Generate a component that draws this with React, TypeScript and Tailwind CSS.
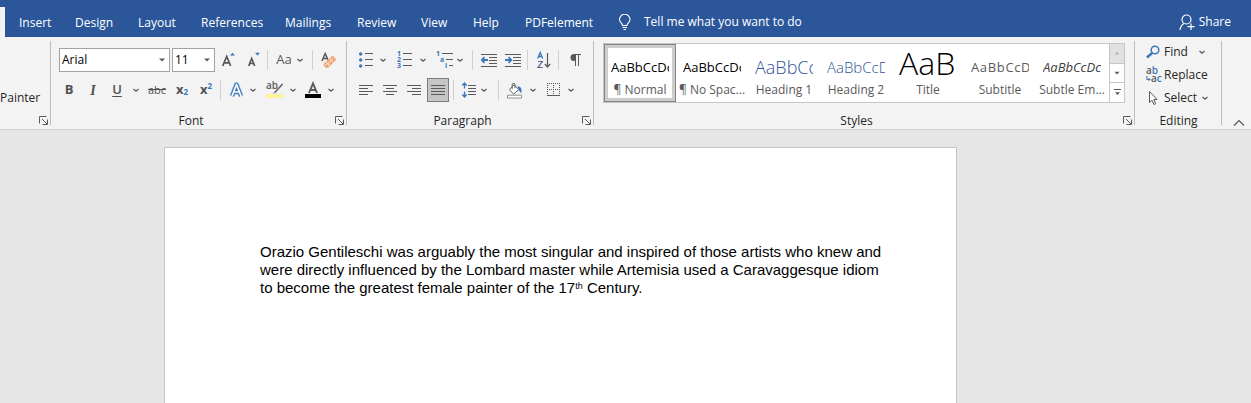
import type { ReactNode } from "react";
import clsx from "clsx";

const TABS = [
  { label: "Insert", width: "w-14" },
  { label: "Design", width: "w-[63px]" },
  { label: "Layout", width: "w-[63px]" },
  { label: "References", width: "w-[84px]" },
  { label: "Mailings", width: "w-[72px]" },
  { label: "Review", width: "w-16" },
  { label: "View", width: "w-[52px]" },
  { label: "Help", width: "w-[52px]" },
  { label: "PDFelement", width: "w-[93px]" },
];

const STYLES = [
  { name: "¶ Normal", sample: "AaBbCcDc", look: "text-[13px] text-black" },
  { name: "¶ No Spac...", sample: "AaBbCcDc", look: "text-[13px] text-black" },
  { name: "Heading 1", sample: "AaBbCc", look: "text-[18px] font-light text-[#2f5496]" },
  { name: "Heading 2", sample: "AaBbCcD", look: "text-[15px] font-light text-[#2f5496]" },
  { name: "Title", sample: "AaB", look: "pb-2 text-[32px] font-light text-black" },
  { name: "Subtitle", sample: "AaBbCcD", look: "text-[13px] tracking-wider text-[#5a5a5a]" },
  { name: "Subtle Em...", sample: "AaBbCcDc", look: "text-[13px] italic text-[#404040]" },
];

const GRAY = "#595959";
const BLUE = "#3b76bb";

function Tool({ label, className, children }: { label: string; className?: string; children: ReactNode }) {
  return (
    <button aria-label={label} title={label} className={clsx("flex h-6 shrink-0 items-center justify-center", className)}>
      {children}
    </button>
  );
}

function ChevronIcon({ className }: { className?: string }) {
  return (
    <svg className={className} width="8" height="8" viewBox="0 0 8 8" fill="none" stroke={GRAY} strokeWidth="1.2">
      <path d="M1.500 3 4 5.200 6.500 3" />
    </svg>
  );
}

function Chevron({ label, className }: { label: string; className?: string }) {
  return (
    <Tool label={label} className={clsx("w-2", className)}>
      <ChevronIcon />
    </Tool>
  );
}

function Separator({ className }: { className?: string }) {
  return <span className={clsx("h-5 w-px shrink-0 bg-[#d0d0d0]", className)} />;
}

// Horizontal strokes given as [x1, x2, y]
function Lines({ rows, color = GRAY }: { rows: number[][]; color?: string }) {
  return (
    <g stroke={color} strokeWidth="1">
      {rows.map(([x1, x2, y]) => (
        <path key={`${x1}-${y}`} d={`M${x1} ${y}H${x2}`} />
      ))}
    </g>
  );
}

function Group({ title, launcher, className, children }: { title: string; launcher?: boolean; className?: string; children: ReactNode }) {
  return (
    <section aria-label={title || "Clipboard"} className={clsx("relative flex shrink-0 flex-col pt-[11px]", className)}>
      <div className="h-[66px]">{children}</div>
      <div className={clsx("text-center text-[12px] leading-4 text-[#262626]", launcher && "pr-4")}>{title}</div>
      {launcher && (
        <button aria-label={`${title || "Clipboard"} settings`} className="absolute right-[3px] bottom-1">
          <svg width="9" height="9" viewBox="0 0 9 9" fill="none" stroke={GRAY}>
            <path d="M.5 7.500V.5H7.500M3 3 8 8M8.500 3.500V8.500H3.500" />
          </svg>
        </button>
      )}
      <span className="absolute top-1 right-0 bottom-1 w-px bg-[#bdbdbd]" />
    </section>
  );
}

function Combo({ label, value, className }: { label: string; value: string; className?: string }) {
  return (
    <button
      aria-label={label}
      className={clsx("ml-0.5 flex h-6 shrink-0 items-center justify-between border border-[#a3a3a3] bg-white pr-1 pl-0.5 text-[12px]", className)}
    >
      {value}
      <svg width="6" height="4" viewBox="0 0 6 4" fill={GRAY}>
        <path d="M0 .5H6L3 3.500Z" />
      </svg>
    </button>
  );
}

function AlignIcon({ rows }: { rows: number[][] }) {
  return (
    <svg width="14" height="14" viewBox="0 0 14 14">
      <Lines rows={rows} />
    </svg>
  );
}

function IndentIcon({ reverse }: { reverse?: boolean }) {
  return (
    <svg width="16" height="14" viewBox="0 0 16 14" fill="none">
      <Lines rows={[[0, 16, 1.5], [8, 16, 4.5], [8, 16, 7.5], [8, 16, 10.5], [0, 16, 13.5]]} />
      <path
        d={reverse ? "M0 7H6M3.500 4.200 6.300 7 3.500 9.800" : "M7 7H1M3.500 4.200.7 7 3.500 9.800"}
        stroke={BLUE}
        strokeWidth="1.8"
      />
    </svg>
  );
}

function FontGroup() {
  return (
    <Group title="Font" launcher className="w-[296px]">
      <div className="flex flex-col gap-1.5 pl-1.5">
        <div className="flex h-6 items-center">
          <Combo label="Font name" value="Arial" className="w-[111px]" />
          <Combo label="Font size" value="11" className="w-[43px]" />
          <Tool label="Increase font size" className="ml-0.5 w-6">
            <svg width="14" height="16" viewBox="0 0 14 16">
              <path d="M.7 14 4.700 4.500 8.700 14M2.200 10.800H7.200" fill="none" stroke={GRAY} strokeWidth="1.700" />
              <path d="M8 3.500H13L10.500 .8Z" fill={BLUE} />
            </svg>
          </Tool>
          <Tool label="Decrease font size" className="w-[26px]">
            <svg width="14" height="16" viewBox="0 0 14 16">
              <path d="M1.700 14 4.700 6.500 7.700 14M2.800 11.500H6.600" fill="none" stroke={GRAY} strokeWidth="1.700" />
              <path d="M8 .8H13L10.500 3.500Z" fill={BLUE} />
            </svg>
          </Tool>
          <Separator />
          <Tool label="Change case" className="w-8 text-[13px] font-medium text-[#595959]">Aa</Tool>
          <Chevron label="Case options" className="-ml-1" />
          <Separator className="ml-2" />
          <Tool label="Clear formatting" className="w-8">
            <svg width="16" height="17" viewBox="0 0 16 17" fill="none">
              <path d="M1 9 4.200 1.500 7 8M2.200 6.500H6" stroke={GRAY} strokeWidth="1.500" />
              <path d="M3 11.500 11.500 3.500 15.500 7.500 7 16H5L2.500 13.500Z" fill="#f0aa7c" />
              <path d="M5 10 9.300 14.300M8.500 6.500 12.500 10.500" stroke="#fbe3d2" />
              <path d="M4.500 12.500H5.500M7 11H8M9 9H10M11 7H12" stroke="#fff" />
            </svg>
          </Tool>
        </div>
        <div className="flex h-6 items-center text-[#505050]">
          <Tool label="Bold" className="w-6 text-[13px] font-bold">B</Tool>
          <Tool label="Italic" className="w-6 font-['Liberation_Serif',serif] text-[14px] font-bold italic">I</Tool>
          <Tool label="Underline" className="w-6 text-[13px] font-semibold underline underline-offset-2">U</Tool>
          <Chevron label="Underline options" className="ml-[3px]" />
          <Tool label="Strikethrough" className="ml-2 w-[18px] text-[11px] line-through">abc</Tool>
          <Tool label="Subscript" className="ml-2 w-4 text-[13px] font-bold">
            x<sub className="text-[8px] text-[#3b76bb]">2</sub>
          </Tool>
          <Tool label="Superscript" className="ml-2 w-4 text-[13px] font-bold">
            x<sup className="text-[8px] text-[#3b76bb]">2</sup>
          </Tool>
          <Separator className="ml-1.5" />
          <Tool label="Text effects" className="ml-2 w-4">
            <svg width="16" height="16" viewBox="0 0 16 16" fill="none" strokeLinejoin="round">
              <path d="M3 14 7.500 2.500 12 14M4.500 10H10.500" stroke="#c3daf0" strokeWidth="5.500" />
              <path d="M3 14 7.500 2.500 12 14M4.500 10H10.500" stroke={BLUE} strokeWidth="4" />
              <path d="M3 14 7.500 2.500 12 14M4.500 10H10.500" stroke="#fff" strokeWidth="1.700" />
            </svg>
          </Tool>
          <Chevron label="Text effect options" className="ml-1" />
          <Tool label="Highlight color" className="ml-2 w-5">
            <svg className="overflow-visible" width="18" height="18" viewBox="0 0 18 18">
              <text x="0" y="8" fontSize="10" fontWeight="600" fill={GRAY}>ab</text>
              <path d="M16.300 2 8.500 10.500 6.500 13 9.500 12 17 4" fill={GRAY} stroke="#f3f3f3" strokeWidth=".5" />
              <path d="M0 13H17V17H0Z" fill="#fdf59a" />
            </svg>
          </Tool>
          <Chevron label="Highlight options" className="ml-1" />
          <Tool label="Font color" className="ml-2 w-4">
            <svg width="16" height="18" viewBox="0 0 16 18">
              <path d="M4 12 8 2.500 12 12M5.500 9H10.500" fill="none" stroke={GRAY} strokeWidth="1.900" />
              <path d="M0 13H16V17H0Z" />
            </svg>
          </Tool>
          <Chevron label="Font color options" className="ml-1.5" />
        </div>
      </div>
    </Group>
  );
}

function ParagraphGroup() {
  return (
    <Group title="Paragraph" launcher className="w-[247px]">
      <div className="flex flex-col gap-1.5 pl-3">
        <div className="flex h-6 items-center">
          <Tool label="Bullets" className="w-4">
            <svg width="16" height="16" viewBox="0 0 16 16">
              <g fill={BLUE}>
                <circle cx="1.700" cy="2" r="1.700" />
                <circle cx="1.700" cy="8" r="1.700" />
                <circle cx="1.700" cy="14" r="1.700" />
              </g>
              <Lines rows={[[6, 14, 1.5], [6, 14, 7.5], [6, 14, 13.5]]} />
            </svg>
          </Tool>
          <Chevron label="Bullet options" className="ml-1" />
          <Tool label="Numbering" className="ml-2.5 w-4">
            <svg className="overflow-visible" width="16" height="18" viewBox="0 0 16 18">
              <g fill={BLUE} fontSize="7" fontWeight="700">
                <text x="0" y="5">1</text>
                <text x="0" y="11">2</text>
                <text x="0" y="17">3</text>
              </g>
              <Lines rows={[[6, 15, 2.5], [6, 15, 8.5], [6, 15, 14.5]]} />
            </svg>
          </Tool>
          <Chevron label="Numbering options" className="ml-1.5" />
          <Tool label="Multilevel list" className="ml-2 w-[19px]">
            <svg className="overflow-visible" width="18" height="18" viewBox="0 0 18 18">
              <g fill={BLUE} fontSize="7" fontWeight="700">
                <text x="0" y="5">1</text>
                <text x="4" y="11">a</text>
                <text x="9" y="17">i</text>
              </g>
              <Lines rows={[[6, 17, 2.5], [10, 17, 8.5], [13, 17, 14.5]]} />
            </svg>
          </Tool>
          <Chevron label="List options" className="ml-0.5" />
          <Separator className="ml-2" />
          <Tool label="Decrease indent" className="ml-2 w-4"><IndentIcon /></Tool>
          <Tool label="Increase indent" className="ml-2 w-4"><IndentIcon reverse /></Tool>
          <Separator className="ml-1.5" />
          <Tool label="Sort" className="ml-2 w-4">
            <svg width="14" height="18" viewBox="0 0 14 18" fill="none">
              <path d="M.7 7.500 3.200 1.500 5.700 7.500M1.500 5.500H5" stroke={BLUE} strokeWidth="1.300" />
              <path d="M1 10.500H5.300L1 16.500H5.700" stroke="#5a5f8a" strokeWidth="1.200" />
              <path d="M10.500 2V16M7.800 13 10.500 16 13.200 13" stroke={GRAY} strokeWidth="1.200" />
            </svg>
          </Tool>
          <Separator className="ml-1.5" />
          <Tool label="Show paragraph marks" className="ml-2 w-4">
            <svg width="11" height="14" viewBox="0 0 11 14">
              <path d="M6 1H4A3.500 3.500 0 0 0 4 8H6Z" fill={GRAY} />
              <path d="M4 1.500H11M5.500 1V13M8.500 1V13" fill="none" stroke={GRAY} />
            </svg>
          </Tool>
        </div>
        <div className="flex h-6 items-center">
          <Tool label="Align left" className="w-3.5">
            <AlignIcon rows={[[0, 14, 2.5], [0, 9, 5.5], [0, 14, 8.5], [0, 9, 11.5]]} />
          </Tool>
          <Tool label="Center" className="ml-2.5 w-3.5">
            <AlignIcon rows={[[0, 14, 2.5], [3, 11, 5.5], [0, 14, 8.5], [3, 11, 11.5]]} />
          </Tool>
          <Tool label="Align right" className="ml-2.5 w-3.5">
            <AlignIcon rows={[[0, 14, 2.5], [5, 14, 5.5], [0, 14, 8.5], [5, 14, 11.5]]} />
          </Tool>
          <Tool label="Justify" className="ml-1.5 w-[22px] border border-[#7b7b7b] bg-[#c5c6c8]">
            <AlignIcon rows={[[0, 14, 2.5], [0, 14, 5.5], [0, 14, 8.5], [0, 14, 11.5]]} />
          </Tool>
          <Separator className="ml-1" />
          <Tool label="Line spacing" className="ml-2 w-3.5">
            <svg width="14" height="16" viewBox="0 0 14 16" fill="none">
              <path d="M2.500 1V6.500M.3 3.500 2.500 1 4.700 3.500M2.500 9.500V15M.3 12.500 2.500 15 4.700 12.500" stroke={BLUE} strokeWidth="1.300" />
              <Lines rows={[[6, 14, 3.5], [6, 14, 6.5], [6, 14, 9.5], [6, 14, 12.5]]} />
            </svg>
          </Tool>
          <Chevron label="Spacing options" className="ml-1" />
          <Separator className="ml-2.5" />
          <Tool label="Shading" className="ml-2 w-4">
            <svg width="17" height="17" viewBox="0 0 17 17" fill="none">
              <path d="M2.500 7.500 7.500 2.500 12.500 7.500 7 12.300Z" fill="#fff" stroke={GRAY} />
              <path d="M5.500 7V2.500A1.500 1.500 0 0 1 8.500 2.500V6" stroke={GRAY} />
              <path d="M11 4C14.500 4 16.500 7 15 11.500L12.500 8Z" fill={BLUE} />
              <path d="M.5 13.500H15.500V16.500H.5Z" fill="#fff" stroke="#8a8a8a" />
            </svg>
          </Tool>
          <Chevron label="Shading options" className="ml-1.5" />
          <Tool label="Borders" className="ml-2.5 w-3.5">
            <svg width="14" height="14" viewBox="0 0 14 14" fill="none" stroke={GRAY}>
              <path d="M0 .5H13M0 6.500H13M.5 0V12M6.500 0V12M12.500 0V12" strokeDasharray="1 1" />
              <path d="M0 12.500H13" />
            </svg>
          </Tool>
          <Chevron label="Border options" className="ml-1.5" />
        </div>
      </div>
    </Group>
  );
}

function StylesGroup() {
  return (
    <Group title="Styles" launcher className="min-w-0 flex-1">
      <div className="-mt-[5px] mr-2.5 ml-[9px] flex h-[60px] border border-[#c6c6c6] bg-white">
        <div className="flex min-w-0 flex-1 overflow-hidden">
          {STYLES.map(({ name, sample, look }, i) => (
            <button key={name} className="relative flex h-[58px] w-[72px] shrink-0 flex-col items-center pt-2">
              {i === 0 && (
                <span className="absolute inset-0 border border-[#858585] outline-[3px] -outline-offset-4 outline-[#cdcdcd]" />
              )}
              <span className={clsx("flex h-[30px] w-[58px] shrink-0 items-center overflow-hidden leading-none whitespace-nowrap", look)}>
                {sample}
              </span>
              <span className="text-[12px] leading-4 whitespace-nowrap text-[#595959]">{name}</span>
            </button>
          ))}
        </div>
        <div className="flex w-[15px] shrink-0 flex-col divide-y divide-[#c6c6c6] border-l border-[#c6c6c6]">
          <button aria-label="Scroll styles up" className="flex flex-1 items-center justify-center bg-[#e1e1e1]">
            <svg width="6" height="4" viewBox="0 0 6 4" fill="#b5b5b5"><path d="M.5 3.500H5.500L3 .8Z" /></svg>
          </button>
          <button aria-label="Scroll styles down" className="flex flex-1 items-center justify-center">
            <svg width="6" height="4" viewBox="0 0 6 4" fill={GRAY}><path d="M.5 .8H5.500L3 3.500Z" /></svg>
          </button>
          <button aria-label="More styles" className="flex flex-1 items-center justify-center">
            <svg width="7" height="7" viewBox="0 0 7 7" fill={GRAY}><path d="M0 0H7V1H0ZM1 3.300H6L3.500 6Z" /></svg>
          </button>
        </div>
      </div>
    </Group>
  );
}

function EditingGroup() {
  return (
    <Group title="Editing" className="w-[87px]">
      <div className="-mt-2 flex flex-col pl-[11px] text-[12px] text-[#262626]">
        <button className="flex h-[23px] items-center gap-1">
          <svg width="14" height="14" viewBox="0 0 14 14" fill="none" stroke={BLUE}>
            <circle cx="9" cy="5" r="3.800" strokeWidth="1.500" />
            <path d="M6 8 1 12.500" strokeWidth="2.400" />
          </svg>
          Find
          <ChevronIcon className="ml-1.5" />
        </button>
        <button className="flex h-[23px] items-center gap-0.5">
          <svg className="overflow-visible" width="16" height="16" viewBox="0 0 16 16">
            <g fontSize="10" fontWeight="600" fill={GRAY}>
              <text x="0" y="7">a<tspan fill={BLUE}>b</tspan></text>
              <text x="5" y="15">a<tspan fill={BLUE}>c</tspan></text>
            </g>
            <path d="M.8 9V12.500H4M2.500 11 4 12.500 2.500 14" fill="none" stroke={BLUE} />
          </svg>
          Replace
        </button>
        <button className="flex h-[23px] items-center gap-1">
          <svg width="14" height="16" viewBox="0 0 14 16" fill="#fff" stroke={GRAY}>
            <path d="M3.500 1.500V12.500L6 10.200 8 14.500 9.700 13.700 7.800 9.500H11Z" />
          </svg>
          Select
          <ChevronIcon />
        </button>
      </div>
    </Group>
  );
}

export default function App() {
  return (
    <div className="flex min-h-screen flex-col bg-[#e6e6e6] font-['Open_Sans',sans-serif]">
      <header className="flex h-[37px] shrink-0 items-center bg-[#2b579a] pt-[7px] text-[12px] text-white">
        <span className="h-full w-[5px] bg-[#f3f3f3]" />
        <nav className="flex h-full items-center pt-0.5 pl-3.5">
          {TABS.map(({ label, width }) => (
            <button key={label} className={clsx("h-full text-left", width)}>{label}</button>
          ))}
        </nav>
        <button className="flex items-center gap-3">
          <svg width="14" height="17" viewBox="0 0 14 17" fill="none" stroke="#fff" strokeWidth="1.100">
            <path d="M4.500 11.500C4.500 9 1.500 8.500 1.500 5.500A5 5 0 0 1 12 5.500C12 8.500 9 9 9 11.500ZM4.500 13.500H9M5.500 15.500H8" />
          </svg>
          Tell me what you want to do
        </button>
        <button className="mr-5 ml-auto flex items-center gap-1">
          <svg width="16" height="17" viewBox="0 0 16 17" fill="none" stroke="#fff" strokeWidth="1.200">
            <circle cx="7.500" cy="5.500" r="4.500" />
            <path d="M1 16C1.500 12.500 3 10.500 5 9.500M12 9.500V16M8.500 12.700H15.500" />
          </svg>
          Share
        </button>
      </header>

      <div className="flex h-[93px] shrink-0 border-b border-[#d2d2d2] bg-[#f3f3f3]">
        <Group title="" launcher className="w-[51px]">
          <button className="mt-[42px] block text-[12px] leading-4 text-[#262626]">Painter</button>
        </Group>
        <FontGroup />
        <ParagraphGroup />
        <StylesGroup />
        <EditingGroup />
        <div className="flex w-[29px] shrink-0 items-end justify-center pb-0.5 pl-1">
          <button aria-label="Collapse the ribbon">
            <svg width="12" height="8" viewBox="0 0 12 8" fill="none" stroke={GRAY} strokeWidth="1.200"><path d="M1 6.500 6 1.500 11 6.500" /></svg>
          </button>
        </div>
      </div>

      <main className="flex flex-1 flex-col pt-[17px] pl-[164px]">
        <article className="w-full max-w-[793px] flex-1 border border-b-0 border-[#c6c6c6] bg-white pt-[95px] pr-16 pl-[95px]">
          <p className="font-['Liberation_Sans',Arial,sans-serif] text-[15px] leading-[18px] text-black">
            Orazio Gentileschi was arguably the most singular and inspired of those artists who knew and
            <br />
            were directly influenced by the Lombard master while Artemisia used a Caravaggesque idiom
            <br />
            to become the greatest female painter of the 17<sup className="text-[9px]">th</sup> Century.
          </p>
        </article>
      </main>
    </div>
  );
}
